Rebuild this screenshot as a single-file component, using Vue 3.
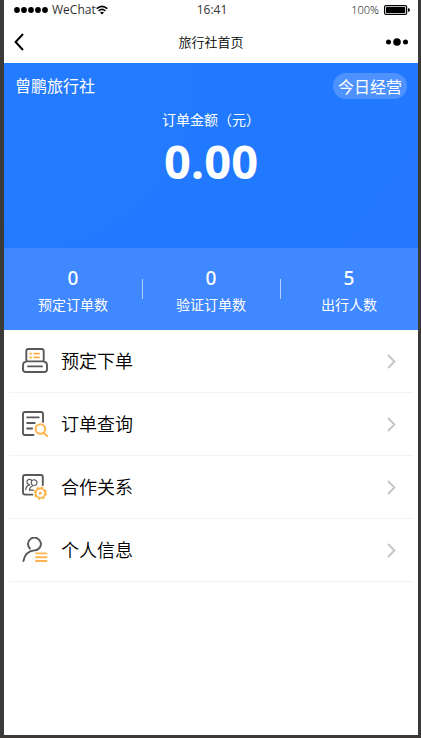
<script setup>
const stats = [
  { value: 0, label: '预定订单数' },
  { value: 0, label: '验证订单数' },
  { value: 5, label: '出行人数' },
]
const menu = [
  { icon: 'book', label: '预定下单' },
  { icon: 'search', label: '订单查询' },
  { icon: 'partner', label: '合作关系' },
  { icon: 'person', label: '个人信息' },
]
</script>

<template>
  <div class="device">
    <div class="screen">
      <header>
        <div class="status">
          <div class="carrier">
            <svg class="signal" viewBox="0 0 35 6" aria-hidden="true">
              <circle v-for="n in 5" :key="n" :cx="n * 7 - 4" cy="3" r="2.9" />
            </svg>
            <span>WeChat</span>
            <svg class="wifi" viewBox="0 0 12 10" aria-hidden="true">
              <path d="M.7 3.6Q6-1 11.3 3.6M2.6 5.8Q6 2.9 9.4 5.8" fill="none" stroke="#000" stroke-width="1.6" />
              <path d="M4 7.4Q6 5.9 8 7.4L6 9.4Z" />
            </svg>
          </div>
          <time>16:41</time>
          <div class="power">
            <span>100%</span>
            <svg class="battery" viewBox="0 0 26 10" aria-hidden="true">
              <rect x=".6" y=".6" width="22" height="8.8" rx="1.5" fill="none" stroke="#000" stroke-width="1.2" />
              <rect x="2" y="2" width="19.2" height="6" rx=".8" />
              <path d="M24 3Q26 3.5 26 5T24 7Z" />
            </svg>
          </div>
        </div>
        <nav class="bar">
          <button class="tool" type="button" aria-label="返回">
            <svg class="back" viewBox="0 0 10 18"><path d="M9 1 1.6 9 9 17" fill="none" stroke="#000" stroke-width="2" /></svg>
          </button>
          <h1>旅行社首页</h1>
          <button class="tool more" type="button" aria-label="更多">
            <svg class="dots" viewBox="0 0 22 8"><circle cx="2.5" cy="4" r="2.5" /><circle cx="11" cy="4" r="3.8" /><circle cx="19.5" cy="4" r="2.5" /></svg>
          </button>
        </nav>
      </header>

      <section class="hero">
        <div class="agency">
          <h2>曾鹏旅行社</h2>
          <button class="today" type="button">今日经营</button>
        </div>
        <p class="caption">订单金额（元）</p>
        <p class="amount">0.00</p>
      </section>

      <section class="stats">
        <div v-for="s in stats" :key="s.label" class="stat">
          <span class="value">{{ s.value }}</span>
          <span class="label">{{ s.label }}</span>
        </div>
      </section>

      <nav class="menu">
        <a v-for="m in menu" :key="m.label" href="#" class="row">
          <svg class="icon" viewBox="0 0 26 26" fill="none" stroke="#58585a" stroke-width="1.9" stroke-linecap="round" stroke-linejoin="round" aria-hidden="true">
            <g v-if="m.icon === 'book'">
              <path d="M4.3 12.2V3q0-2 2-2h13.4q2 0 2 2v9.2M4.3 12.2q.2 1.2 1.6 1.2h14.2q1.4 0 1.6-1.2M4.1 13.6Q1 14 1 17v4.2Q1 24 3.8 24h18.4q2.8 0 2.8-2.8V17q0-3-3.1-3.4M6 18.4h14" />
              <path d="M8 5.6h1M12.3 5.6H17M8 9.4h1M12.3 9.4H17" stroke="#ffad42" />
            </g>
            <g v-else-if="m.icon === 'search'">
              <path d="M11.5 24H3q-2 0-2-2V3q0-2 2-2h16q2 0 2 2v8M5.2 6.4h11.5M5.2 12h7.5M5.2 17.5h5" />
              <path d="M23.2 18a4.8 4.8 0 1 1-9.6 0a4.8 4.8 0 1 1 9.6 0M22 22l3 3" stroke="#ffb650" stroke-width="2.1" />
            </g>
            <g v-else-if="m.icon === 'partner'">
              <path d="M10.5 20.6H3q-2 0-2-2V3q0-2 2-2h15.8q2 0 2 2v8" />
              <g stroke-width="1.2">
                <path d="M7.6 10.6a2.6 2.6 0 1 1 2-4.2M3.8 15.6q.2-4 3.8-4.8" />
                <path d="M10.4 11a2.9 2.9 0 1 1 2.2.5q-4.8.2-5.2 4.7h4" />
              </g>
              <g stroke="#ffb650">
                <circle cx="18.4" cy="19.2" r="4.7" />
                <circle cx="18.4" cy="19.2" r="5.9" stroke-width="1.5" stroke-dasharray="2.3 2.33" stroke-linecap="butt" />
                <circle cx="18.4" cy="19.2" r="1" stroke-width="1.2" />
              </g>
            </g>
            <g v-else>
              <path d="M8 11.6a6.4 6.4 0 1 1 4.4 1.8Q3 14.4 1.4 24" />
              <path d="M14 16.4h10.5M14 20.2h10.5M14 24h10.5" stroke="#ffb650" />
            </g>
          </svg>
          <span class="name">{{ m.label }}</span>
          <svg class="arrow" viewBox="0 0 9 15" aria-hidden="true"><path d="m1 1 6.5 6.5L1 14" fill="none" stroke="#c3c3c8" stroke-width="1.8" /></svg>
        </a>
      </nav>
    </div>
  </div>
</template>

<style>
body { margin: 0; background: #3b3a39; }
</style>

<style scoped>
* { box-sizing: border-box; }
.device {
  display: flex;
  min-height: 100vh;
  padding: 0 3px 3px 4px;
  background: #3b3a39;
  font-family: "Open Sans", "Noto Sans CJK SC", sans-serif;
}
.screen { flex: 1; min-width: 0; background: #fff; color: #000; }
h1, h2, p { margin: 0; font-weight: 400; }
button { padding: 0; border: 0; background: none; color: inherit; font: inherit; }
svg { display: block; flex: none; }
.status {
  display: grid;
  grid-template-columns: 1fr auto 1fr;
  align-items: center;
  height: 20px;
  padding: 0 8px 0 10px;
  font-size: 12px;
  line-height: 20px;
  color: #333;
}
.carrier, .power { display: flex; align-items: center; }
.carrier .signal { width: 35px; height: 6px; margin-right: 3px; }
.wifi { width: 12px; height: 10px; }
.power { justify-content: flex-end; gap: 5px; font-size: 11px; font-weight: 300; color: #000; }
.battery { width: 26px; height: 10px; }
.bar {
  display: grid;
  grid-template-columns: 1fr auto 1fr;
  align-items: center;
  height: 43px;
  padding: 0 10px;
}
.bar h1 { font-size: 13px; font-weight: 350; line-height: 20px; }
.tool { display: flex; align-items: center; height: 40px; }
.more { justify-content: flex-end; }
.back { width: 10px; height: 18px; }
.dots { width: 22px; height: 8px; }
.hero {
  height: 185px;
  padding: 10px 11px 0;
  color: #fff;
  text-align: center;
  background:
    radial-gradient(circle at 0 0, #257bff 0 160px, transparent 220px),
    linear-gradient(125deg, #2179ff 70%, #2578ff);
}
.agency { display: flex; align-items: center; justify-content: space-between; }
.agency h2 { font-size: 16px; line-height: 24px; }
.today {
  height: 26px;
  padding: 0 5px;
  border-radius: 13px;
  background: #4e92ff;
  font-size: 16px;
  line-height: 28px;
}
.caption { margin-top: 11px; font-size: 14px; line-height: 20px; }
.amount { font-size: 47px; font-weight: 700; line-height: 62px; }
.stats {
  display: grid;
  grid-template-columns: repeat(3, 1fr);
  height: 82px;
  padding-top: 18px;
  background: #4088ff;
  color: #fff;
}
.stat { position: relative; display: flex; flex-direction: column; align-items: center; }
.stat + .stat::before {
  content: "";
  position: absolute;
  left: 0;
  top: 13px;
  width: 1px;
  height: 20px;
  background: #b3d0ff;
}
.value { font-family: "Noto Sans", "Open Sans", sans-serif; font-size: 19px; font-weight: 500; line-height: 25px; }
.label { font-size: 14px; line-height: 28px; }
.menu { padding: 0 5px; }
.row {
  display: flex;
  align-items: center;
  height: 63px;
  padding: 0 17px 0 13px;
  border-bottom: 1px solid #f2f2f8;
  color: #000;
  text-decoration: none;
}
.icon { width: 26px; height: 26px; }
.name { flex: 1; margin-left: 13px; font-size: 18px; font-weight: 350; line-height: 26px; }
.arrow { width: 9px; height: 15px; }
</style>
